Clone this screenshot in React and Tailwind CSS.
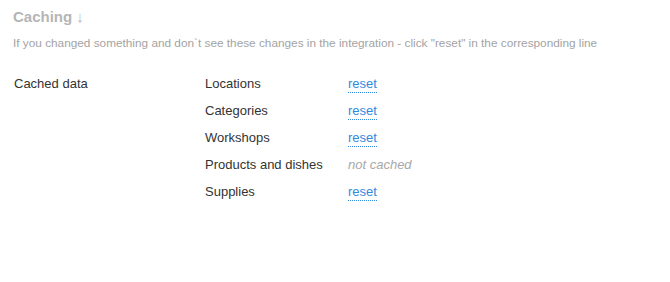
const rows = [
  { name: 'Locations', cached: true },
  { name: 'Categories', cached: true },
  { name: 'Workshops', cached: true },
  { name: 'Products and dishes', cached: false },
  { name: 'Supplies', cached: true },
]

export default function App() {
  return (
    <div className="min-h-screen bg-white px-[13px] pt-[8px] font-['Liberation_Sans',Arial,sans-serif]">
      <h2 className="text-[15px] leading-[18px] font-bold text-[#b5b5b5]">Caching ↓</h2>
      <p className="mt-[9px] text-[11.8px] leading-[16px] text-[#a3a3a3]">
        If you changed something and don`t see these changes in the integration - click "reset" in the corresponding line
      </p>

      <div className="mt-[25px] flex text-[13px] leading-[16px] text-[#333]">
        <div className="w-[192px] pl-[1px]">Cached data</div>
        <div className="flex flex-col">
          {rows.map((row) => (
            <div key={row.name} className="flex h-[27px]">
              <div className="w-[143px]">{row.name}</div>
              {row.cached ? (
                <div>
                  <a href="#" className="text-[#2f8ae0] border-b border-dotted border-[#2f8ae0] pb-[1px]">
                    reset
                  </a>
                </div>
              ) : (
                <span className="italic text-[#a8a8a8]">not cached</span>
              )}
            </div>
          ))}
        </div>
      </div>
    </div>
  )
}
